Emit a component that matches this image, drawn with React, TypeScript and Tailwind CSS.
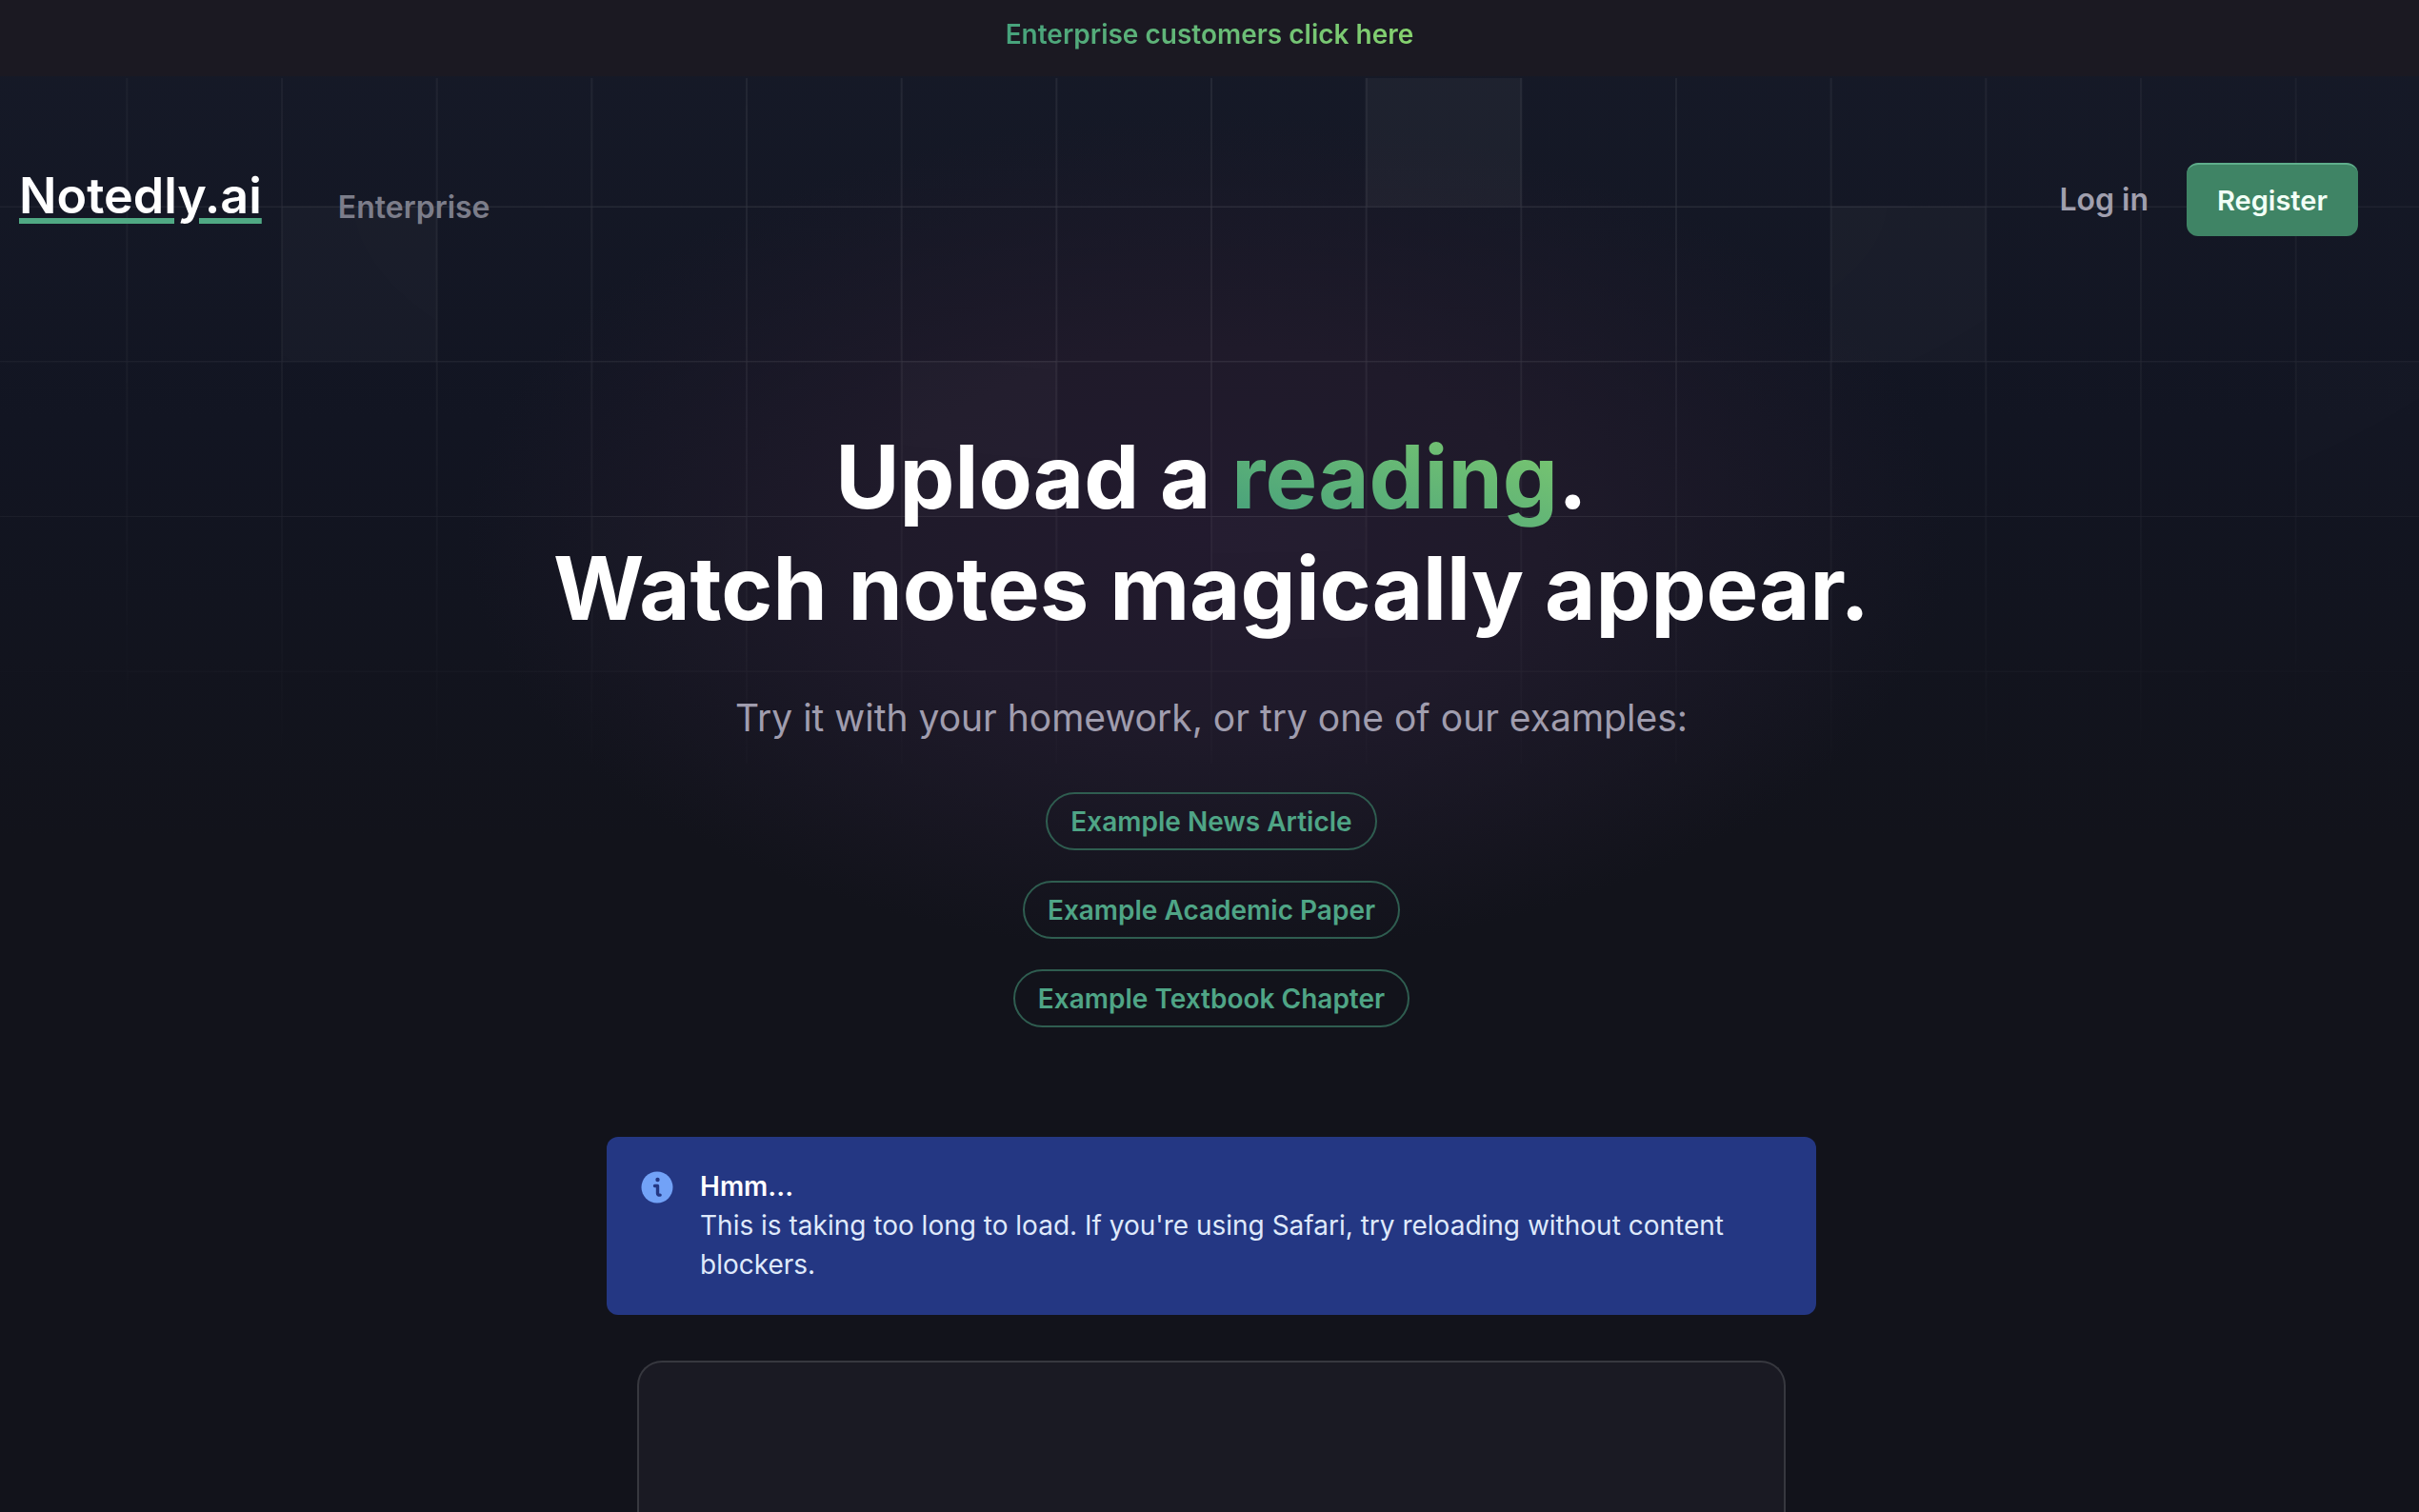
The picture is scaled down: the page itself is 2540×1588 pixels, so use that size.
const CELL = 162.66;

// [column, row] of the highlighted squares, counted from the centre line
const squares = [
  [1, 0],
  [-6, 1],
  [4, 1],
  [-2, 2],
  [7, 2],
  [-4, 3],
  [0, 3],
  [-7, 4],
  [5, 4],
];

const examples = [
  "Example News Article",
  "Example Academic Paper",
  "Example Textbook Chapter",
];

function GridBackdrop() {
  return (
    <svg
      aria-hidden="true"
      className="absolute inset-x-0 top-[82px] h-[720px] w-full [mask-image:radial-gradient(84%_96%_at_50%_18%,white_20%,transparent)]"
    >
      <defs>
        <pattern
          id="grid"
          x="50%"
          y="-28"
          width={CELL}
          height={CELL}
          patternUnits="userSpaceOnUse"
        >
          <path d={`M2 0V${CELL}M0 0.5H${CELL}`} stroke="#ffffff" strokeOpacity="0.13" fill="none" />
        </pattern>
      </defs>
      <svg x="50%" y="-28" className="overflow-visible">
        {squares.map(([col, row]) => (
          <rect
            key={`${col}:${row}`}
            x={col * CELL + 2}
            y={row * CELL}
            width={CELL}
            height={CELL}
            fill="#ffffff"
            fillOpacity={row === 0 ? 0.04 : row === 1 ? 0.035 : 0.025}
          />
        ))}
      </svg>
      <rect width="100%" height="100%" fill="url(#grid)" />
    </svg>
  );
}

function InfoIcon() {
  return (
    <svg viewBox="0 0 34 34" className="mt-1 size-[34px] shrink-0" aria-hidden="true">
      <circle cx="17" cy="17" r="16.5" fill="#72a2f7" />
      <circle cx="17.5" cy="9" r="2.2" fill="#243783" />
      <path d="M14.5 15.5h3v8q0 1.8 2.6 1.6" fill="none" stroke="#243783" strokeWidth="3.4" strokeLinecap="round" strokeLinejoin="round" />
    </svg>
  );
}

export default function App() {
  return (
    <div className="relative flex min-h-screen flex-col overflow-hidden bg-[#12131b] font-[Inter,sans-serif]">
      <div className="absolute inset-x-0 top-0 h-[880px] bg-linear-to-b from-[#161a28] via-[#121522] to-[#12131b]" />
      <div className="absolute inset-x-0 top-[82px] h-[960px] bg-[radial-gradient(780px_440px_at_50%_480px,#221a2e_0%,#1f1a2a_45%,transparent_100%)]" />
      <GridBackdrop />

      <div className="relative flex h-20 items-start justify-center bg-[#1b1922] pt-4">
        <a
          href="#enterprise"
          className="bg-linear-to-r from-[#46a27c] to-[#86d26e] bg-clip-text text-[28px] leading-10 font-semibold text-transparent"
        >
          Enterprise customers click here
        </a>
      </div>

      <header className="relative mt-[91px] flex h-[77px] items-center pr-16 pl-5">
        <a
          href="#home"
          className="mb-2 text-[52px] leading-[60px] font-semibold text-white underline decoration-[#50a984] decoration-[6px] underline-offset-[5px]"
        >
          Notedly.ai
        </a>
        <a href="#enterprise" className="mt-4 ml-20 text-[32px] leading-10 font-semibold text-[#7c7d8a]">
          Enterprise
        </a>
        <div className="ml-auto flex items-center gap-10">
          <a href="#login" className="text-[32px] leading-10 font-semibold text-[#a09fae]">
            Log in
          </a>
          <button
            type="button"
            className="h-[77px] rounded-xl border-t-2 border-[#5fae8b] bg-[#3f8465] px-8 text-[29px] font-semibold text-[#f2fff6]"
          >
            Register
          </button>
        </div>
      </header>

      <main className="relative flex flex-1 flex-col items-center pl-1">
        <h1 className="mt-[194px] text-center text-[92px] leading-[117px] font-bold text-white">
          Upload a{" "}
          <span className="bg-linear-to-tr from-[#449f7c] to-[#7fcb6d] bg-clip-text text-transparent">reading</span>.
          <br />
          Watch notes magically appear.
        </h1>
        <p className="mt-[50px] text-[39px] leading-[56px] text-[#a09dae]">
          Try it with your homework, or try one of our examples:
        </p>

        <div className="mt-[50px] flex flex-col items-center gap-8">
          {examples.map((label) => (
            <button
              key={label}
              type="button"
              className="h-[61px] rounded-full border-2 border-[#2f5d50] px-6 text-[28px] font-semibold text-[#4fa586]"
            >
              {label}
            </button>
          ))}
        </div>

        <div role="alert" className="mt-[115px] flex w-full max-w-[1270px] gap-7 rounded-xl bg-[#243783] px-9 py-8 text-[28px] leading-[41px] text-[#dfe9fb]">
          <InfoIcon />
          <div>
            <p className="font-semibold text-white">Hmm...</p>
            <p>This is taking too long to load. If you're using Safari, try reloading without content blockers.</p>
          </div>
        </div>

        <section className="mt-12 min-h-[157px] w-full max-w-[1206px] flex-1 rounded-t-[26px] border-2 border-b-0 border-[#37383f] bg-[#1a1a23]" />
      </main>
    </div>
  );
}
